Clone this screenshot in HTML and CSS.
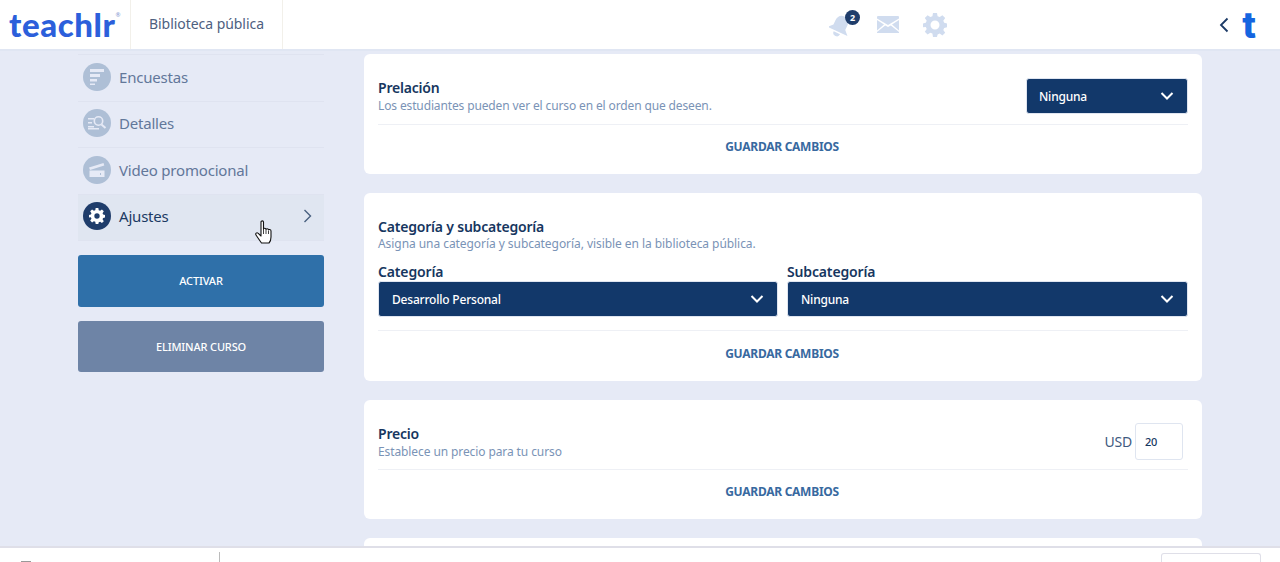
FILE: index.html
```html
<!DOCTYPE html>
<html lang="es">
  <head>
    <meta charset="UTF-8" />
    <meta name="viewport" content="width=device-width, initial-scale=1.0" />
    <title>Teachlr - Ajustes del curso</title>
    <link rel="stylesheet" href="styles.css">
  </head>
  <body>
    <div class="header">
      <div class="logo-box">
        <span class="logo">teachlr</span><span class="logo-reg">®</span>
      </div>
      <div class="library-link">Biblioteca pública</div>
      <div class="header-icons">
        <div class="bell">
          <svg width="24" height="24" viewBox="0 0 24 24">
            <g transform="rotate(25 11 13)">
              <path d="M11 2.500c-4 0-6.500 3-6.500 7v5L0 19h22l-4.500-4.500v-5c0-4-2.500-7-6.500-7z" fill="#d0dcef" />
              <path d="M7.500 20.500a3.500 3.500 0 0 0 7 0z" fill="#d0dcef" />
            </g>
          </svg>
          <span class="badge">2</span>
        </div>
        <svg width="22" height="17" viewBox="0 0 22 17">
          <path d="M1 0h20a1 1 0 0 1 1 1v1.500L11 9 0 2.500V1a1 1 0 0 1 1-1z" fill="#d0dcef" />
          <path d="M0 4l7 4.500L0 14.500zM22 4l-7 4.500 7 6zM8.200 9.500L11 11l2.800-1.500L22 16v1H0v-1z" fill="#d0dcef" />
        </svg>
        <svg width="24" height="24" viewBox="0 0 24 24">
          <path fill-rule="evenodd" fill="#d0dcef" d="M10 0h4l.6 3.200 2.100.9L19.400 2.200l2.800 2.800-1.900 2.700.9 2.100L24 10.400v3.900l-2.800.6-.9 2.100 1.900 2.700-2.800 2.800-2.700-1.900-2.100.9L14 24h-4l-.6-3.400-2.100-.9-2.700 1.900-2.800-2.800 1.900-2.700-.9-2.100L0 14.300v-3.900l2.800-.6.9-2.100L1.800 5l2.800-2.800 2.700 1.900 2.100-.9zM12 7.500a4.500 4.500 0 1 0 0 9 4.500 4.500 0 0 0 0-9z" />
        </svg>
      </div>
      <div class="header-right">
        <svg class="back" width="10" height="16" viewBox="0 0 10 16">
          <path d="M8.500 1.500L2 8l6.500 6.500" fill="none" stroke="#1b3a66" stroke-width="1.800" />
        </svg>
        <span class="logo-t">t</span>
      </div>
    </div>

    <div class="page">
      <div class="sidebar">
        <div class="menu-item">
          <span class="menu-icon">
            <svg width="16" height="18" viewBox="0 0 16 18">
              <path d="M1 1h14v3H1zM1 6h10v3H1zM1 11h7v2.500H1zM1 15.500h5V17H1z" fill="#e6eaf6" />
            </svg>
          </span>
          Encuestas
        </div>
        <div class="menu-item">
          <span class="menu-icon">
            <svg width="20" height="16" viewBox="0 0 20 16">
              <path d="M1 3h6v1.500H1zM1 7h4v1.500H1zM1 11h6v1.500H1z" fill="#e6eaf6" />
              <circle cx="11.500" cy="6" r="4.200" fill="none" stroke="#e6eaf6" stroke-width="1.600" />
              <path d="M14.500 9.500l4 3.500" stroke="#e6eaf6" stroke-width="2" />
              <path d="M9 13h3v1.500H1V13z" fill="#e6eaf6" />
            </svg>
          </span>
          Detalles
        </div>
        <div class="menu-item">
          <span class="menu-icon">
            <svg width="18" height="16" viewBox="0 0 18 16">
              <path d="M1 5.500L15.500 1l.8 2.500L2 8z" fill="#e6eaf6" />
              <path d="M1.500 8.500h15V15h-15z" fill="#e6eaf6" />
              <path d="M12 11h1v2h-1z" fill="#aebfd6" />
            </svg>
          </span>
          Video promocional
        </div>
        <div class="menu-item active">
          <span class="menu-icon">
            <svg width="16" height="16" viewBox="0 0 24 24">
              <path fill-rule="evenodd" fill="#fff" d="M10 0h4l.6 3.200 2.100.9L19.400 2.200l2.800 2.800-1.900 2.700.9 2.100L24 10.400v3.900l-2.800.6-.9 2.100 1.900 2.700-2.800 2.800-2.700-1.900-2.100.9L14 24h-4l-.6-3.400-2.100-.9-2.700 1.900-2.800-2.800 1.900-2.700-.9-2.100L0 14.300v-3.900l2.800-.6.9-2.100L1.800 5l2.800-2.800 2.700 1.900 2.100-.9zM12 8a4 4 0 1 0 0 8 4 4 0 0 0 0-8z" />
            </svg>
          </span>
          Ajustes
          <svg class="menu-arrow" width="9" height="14" viewBox="0 0 9 14">
            <path d="M1.500 1l6 6-6 6" fill="none" stroke="#48607f" stroke-width="1.400" />
          </svg>
          <svg class="hand" width="18" height="24" viewBox="0 0 18 24">
            <path d="M6 2c0-1.500 2.500-1.500 2.500 0v7c0-1 2.500-1 2.500 .5 0-1 2.500-1 2.500 .5 .2-.8 2.500-.8 2.500 1v6c0 3-1.500 5.500-2 6H6.500C5 21 1 15 1 15c-1-1.500 .8-3 2-1.800L6 16z" fill="#fff" stroke="#111" stroke-width="1.100" stroke-linejoin="round" />
            <path d="M8.500 9v5M11 10v4M13.500 11v3" stroke="#111" stroke-width=".8" />
          </svg>
        </div>
        <div class="side-button blue">ACTIVAR</div>
        <div class="side-button gray">ELIMINAR CURSO</div>
      </div>

      <div class="main">
        <div class="card card-first">
          <div class="card-row">
            <div class="card-text">
              <h3>Prelación</h3>
              <p>Los estudiantes pueden ver el curso en el orden que deseen.</p>
            </div>
            <div class="select select-small">Ninguna
              <svg width="14" height="8" viewBox="0 0 14 8"><path d="M1.500 1L7 6.500 12.500 1" fill="none" stroke="#fff" stroke-width="2" /></svg>
            </div>
          </div>
          <div class="save">GUARDAR CAMBIOS</div>
        </div>

        <div class="card card-second">
          <div class="card-text">
            <h3>Categoría y subcategoría</h3>
            <p>Asigna una categoría y subcategoría, visible en la biblioteca pública.</p>
          </div>
          <div class="select-grid">
            <div>
              <label>Categoría</label>
              <div class="select">Desarrollo Personal
                <svg width="14" height="8" viewBox="0 0 14 8"><path d="M1.500 1L7 6.500 12.500 1" fill="none" stroke="#fff" stroke-width="2" /></svg>
              </div>
            </div>
            <div>
              <label>Subcategoría</label>
              <div class="select">Ninguna
                <svg width="14" height="8" viewBox="0 0 14 8"><path d="M1.500 1L7 6.500 12.500 1" fill="none" stroke="#fff" stroke-width="2" /></svg>
              </div>
            </div>
          </div>
          <div class="save">GUARDAR CAMBIOS</div>
        </div>

        <div class="card card-third">
          <div class="card-row">
            <div class="card-text">
              <h3>Precio</h3>
              <p>Establece un precio para tu curso</p>
            </div>
            <div class="price">USD <span class="price-input">20</span></div>
          </div>
          <div class="save">GUARDAR CAMBIOS</div>
        </div>

        <div class="card card-last"></div>
      </div>
    </div>

    <div class="footer">
      <div class="footer-left"><span class="footer-icon"></span></div>
      <div class="footer-line"></div>
      <div class="footer-box"></div>
    </div>
  </body>
</html>
```

FILE: styles.css
```css
* {
  box-sizing: border-box;
}
html,
body {
  height: 100%;
}
body {
  font-family: "Noto Sans", "Open Sans", sans-serif;
  background-color: #e6eaf6;
  color: #163660;
  margin: 0;
  display: flex;
  flex-direction: column;
  overflow: hidden;
}
.header {
  height: 51px;
  flex: none;
  background-color: #fff;
  border-bottom: 2px solid #e0e6f3;
  display: flex;
  align-items: center;
}
.logo-box {
  width: 131px;
  height: 49px;
  border-right: 1px solid #f2f0ea;
  padding-left: 9px;
  display: flex;
  align-items: center;
}
.logo {
  font-family: "Lato", sans-serif;
  font-weight: 900;
  font-size: 33px;
  letter-spacing: 0.6px;
  color: #2c5fdb;
  line-height: 1;
}
.logo-reg {
  font-size: 6px;
  color: #7f97cf;
  align-self: flex-start;
  margin-top: 11px;
}
.library-link {
  width: 152px;
  height: 49px;
  border-right: 1px solid #f2f0ea;
  padding-left: 18px;
  font-size: 14px;
  letter-spacing: -0.05px;
  line-height: 48px;
  color: #4e607f;
}
.header-icons {
  margin-left: 546px;
  display: flex;
  align-items: center;
  gap: 24px;
}
.bell {
  position: relative;
  width: 24px;
  height: 24px;
}
.badge {
  position: absolute;
  top: -3px;
  right: -7px;
  width: 15px;
  height: 15px;
  border-radius: 50%;
  background-color: #1f3d6b;
  color: #fff;
  font-size: 9px;
  font-weight: 700;
  line-height: 15px;
  text-align: center;
}
.header-right {
  margin-left: auto;
  padding-right: 24px;
  display: flex;
  align-items: center;
  gap: 13px;
}
.logo-t {
  font-family: "Inter", sans-serif;
  font-weight: 800;
  font-size: 36px;
  line-height: 34px;
  color: #1565e0;
}
.page {
  flex: 1;
  min-height: 0;
  display: flex;
  padding-left: 78px;
  overflow: hidden;
}
.sidebar {
  width: 246px;
  flex: none;
  padding-top: 3px;
}
.menu-item {
  position: relative;
  height: 46.500px;
  padding-left: 5px;
  padding-bottom: 2px;
  display: flex;
  align-items: center;
  gap: 8px;
  border-top: 1px solid #dfe3f0;
  font-size: 15px;
  letter-spacing: -0.2px;
  color: #62779a;
}
.menu-icon {
  width: 28px;
  height: 28px;
  border-radius: 50%;
  background-color: #aebfd6;
  display: flex;
  align-items: center;
  justify-content: center;
}
.menu-item.active {
  background-color: #e0e6f1;
  color: #1c3a63;
  border-bottom: 1px solid #dfe3f0;
  height: 47px;
}
.active .menu-icon {
  background-color: #1f3d6b;
}
.menu-arrow {
  margin-left: auto;
  margin-right: 12px;
}
.hand {
  position: absolute;
  left: 177px;
  top: 25px;
}
.side-button {
  height: 52px;
  border-radius: 3px;
  color: #fff;
  font-size: 11px;
  font-weight: 500;
  letter-spacing: -0.15px;
  display: flex;
  align-items: center;
  justify-content: center;
  margin-top: 14px;
}
.blue {
  background-color: #2f70a9;
}
.gray {
  background-color: #6e84a6;
  height: 51px;
}
.main {
  width: 838px;
  flex: none;
  margin-left: 40px;
  padding-top: 3px;
}
.card {
  background-color: #fff;
  border-radius: 6px;
  padding: 0 14px;
  margin-bottom: 19px;
}
.card-first {
  height: 120px;
  padding-top: 19px;
}
.card-second {
  height: 188px;
  padding-top: 25px;
}
.card-third {
  height: 119px;
  padding-top: 18px;
}
.card-last {
  height: 60px;
}
.card-row {
  display: flex;
  justify-content: space-between;
  align-items: center;
}
.card-first .card-row {
  height: 51px;
}
.card-third .card-row {
  height: 51px;
}
.card-text h3 {
  margin: 0;
  font-size: 14px;
  letter-spacing: -0.2px;
  line-height: 18px;
  font-weight: 600;
  color: #163660;
}
.card-text p {
  margin: 0;
  font-size: 12px;
  letter-spacing: -0.1px;
  line-height: 16px;
  color: #7a93b6;
}
.card-first .card-text {
  padding-bottom: 4px;
}
.card-first .card-text p {
  letter-spacing: -0.13px;
  padding-top: 1px;
}
.card-second .card-text p {
  letter-spacing: -0.06px;
}
.card-third .card-text {
  padding-bottom: 2px;
}
.card-third .card-text p {
  padding-top: 1px;
}
.select {
  height: 36px;
  background-color: #12386a;
  border: 1px solid #dfe5f0;
  border-radius: 3px;
  color: #fff;
  font-size: 12px;
  font-weight: 500;
  letter-spacing: -0.2px;
  padding: 0 13px;
  display: flex;
  align-items: center;
  justify-content: space-between;
}
.select-small {
  width: 162px;
  margin-bottom: 5px;
  padding-left: 12px;
}
.select-grid {
  display: grid;
  grid-template-columns: 400px 401px;
  gap: 9px;
  margin-top: 11px;
  height: 67px;
}
.select-grid label {
  display: block;
  font-size: 14px;
  letter-spacing: -0.15px;
  line-height: 18px;
  font-weight: 600;
  color: #163660;
}
.save {
  height: 50px;
  border-top: 1px solid #eef0f5;
  padding-right: 2px;
  text-align: center;
  font-size: 12px;
  font-weight: 700;
  letter-spacing: -0.27px;
  line-height: 43px;
  color: #38699f;
}
.card-second .save {
  line-height: 45px;
}
.price {
  display: flex;
  align-items: center;
  gap: 3px;
  font-size: 14px;
  letter-spacing: -0.2px;
  color: #3f5a80;
  margin-right: 5px;
  margin-bottom: 5px;
}
.price-input {
  width: 48px;
  height: 37px;
  border: 1px solid #dfe5f0;
  border-radius: 3px;
  font-size: 11px;
  font-weight: 500;
  color: #163660;
  padding-left: 9px;
  line-height: 35px;
}
.footer {
  height: 16px;
  flex: none;
  background-color: #fff;
  border-top: 2px solid #dfdfe8;
  display: flex;
  padding-top: 4px;
  position: relative;
  z-index: 2;
}
.footer-left {
  width: 219px;
  padding-left: 21px;
  padding-top: 9px;
}
.footer-icon {
  display: block;
  width: 10px;
  height: 1px;
  background-color: #999;
}
.footer-line {
  width: 1px;
  height: 10px;
  background-color: #bbb;
}
.footer-box {
  margin-left: auto;
  margin-right: 19px;
  margin-top: 1px;
  width: 100px;
  height: 9px;
  border: 1px solid #dfdfe8;
  border-bottom: none;
  border-radius: 3px 3px 0 0;
}
```
